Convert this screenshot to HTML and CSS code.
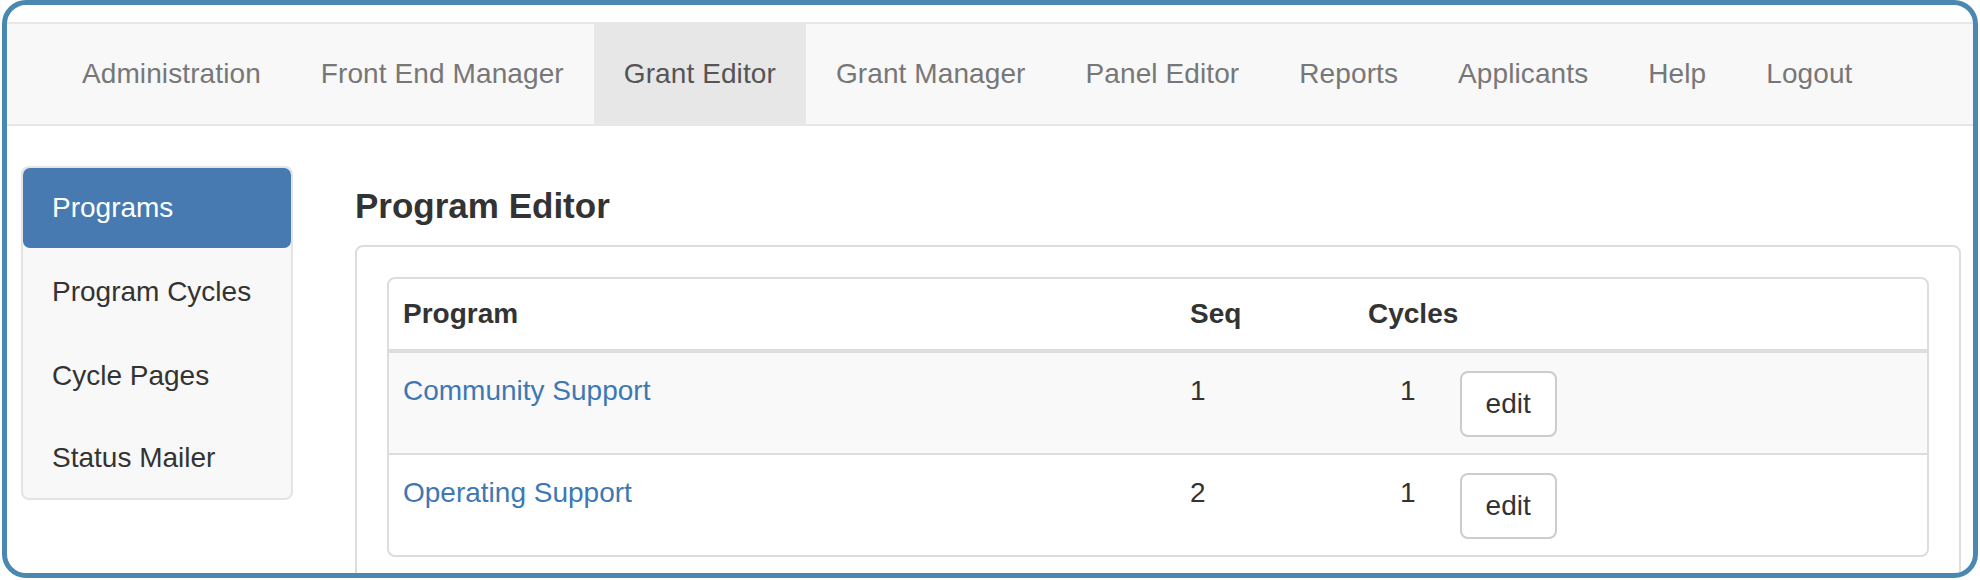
FILE: index.html
```html
<!DOCTYPE html>
<html>
<head>
<meta charset="utf-8">
<title>Program Editor</title>
<link rel="stylesheet" href="styles.css">
</head>
<body>
<div class="frame">
  <nav class="navbar">
    <ul class="nav">
      <li><a href="#">Administration</a></li>
      <li><a href="#">Front End Manager</a></li>
      <li class="active"><a href="#">Grant Editor</a></li>
      <li><a href="#">Grant Manager</a></li>
      <li><a href="#">Panel Editor</a></li>
      <li><a href="#">Reports</a></li>
      <li><a href="#">Applicants</a></li>
      <li><a href="#">Help</a></li>
      <li><a href="#">Logout</a></li>
    </ul>
  </nav>
  <div class="layout">
    <aside class="sidebar">
      <a class="side-item active" href="#">Programs</a>
      <a class="side-item" href="#">Program Cycles</a>
      <a class="side-item" href="#">Cycle Pages</a>
      <a class="side-item last" href="#">Status Mailer</a>
    </aside>
    <main class="main">
      <h4 class="title">Program Editor</h4>
      <div class="panel">
        <div class="table-box">
          <table class="grid">
            <thead>
              <tr>
                <th class="col-program">Program</th>
                <th class="col-seq">Seq</th>
                <th>Cycles</th>
              </tr>
            </thead>
            <tbody>
              <tr class="odd">
                <td><a class="link" href="#">Community Support</a></td>
                <td>1</td>
                <td><div class="cycles"><span class="count">1</span><button class="btn">edit</button></div></td>
              </tr>
              <tr>
                <td><a class="link" href="#">Operating Support</a></td>
                <td>2</td>
                <td><div class="cycles"><span class="count">1</span><button class="btn">edit</button></div></td>
              </tr>
            </tbody>
          </table>
        </div>
      </div>
    </main>
  </div>
</div>
</body>
</html>
```
FILE: styles.css
```css
html, body {
  margin: 0;
  padding: 0;
  background: #ffffff;
}
body {
  font-family: "Liberation Sans", Arial, Helvetica, sans-serif;
  font-size: 28px;
  line-height: 40px;
  color: #333333;
}
.frame {
  box-sizing: border-box;
  margin: 0 2px;
  height: 578px;
  border: 5px solid #4a87b1;
  border-radius: 24px;
  overflow: hidden;
  padding-top: 17px;
  background: #ffffff;
}
.navbar {
  background: #f8f8f8;
  border-top: 2px solid #e7e7e7;
  border-bottom: 2px solid #e7e7e7;
  height: 100px;
}
.nav {
  list-style: none;
  margin: 0;
  padding: 0 0 0 45px;
  display: flex;
  height: 100px;
}
.nav li a {
  display: block;
  padding: 30px 30px;
  line-height: 40px;
  color: #777777;
  text-decoration: none;
  letter-spacing: 0.1px;
}
.nav li.active a {
  background: #e7e7e7;
  color: #555555;
}
.layout {
  display: flex;
  align-items: flex-start;
  margin-top: 40px;
  padding: 0 12px 0 14px;
  gap: 62px;
}
.sidebar {
  flex: 0 0 272px;
  box-sizing: border-box;
  width: 272px;
  background: #f8f8f8;
  border: 2px solid #e4e4e4;
  border-radius: 8px;
  display: flex;
  flex-direction: column;
}
.side-item {
  display: block;
  height: 84px;
  line-height: 84px;
  padding: 0 30px 0 29px;
  color: #333333;
  text-decoration: none;
}
.side-item.active {
  height: 80px;
  line-height: 80px;
  margin-bottom: 2px;
  background: #467ab1;
  color: #ffffff;
  border-radius: 7px;
}
.side-item.last {
  height: 80px;
  line-height: 80px;
}
.main {
  flex: 1 1 auto;
  min-width: 0;
}
.title {
  margin: 20px 0 19px 0;
  font-size: 35px;
  line-height: 40px;
  font-weight: bold;
  color: #333333;
}
.panel {
  border: 2px solid #dddddd;
  border-radius: 8px;
  padding: 30px;
}
.table-box {
  border: 2px solid #dddddd;
  border-radius: 8px;
  overflow: hidden;
}
.grid {
  width: 100%;
  border-collapse: collapse;
}
.grid th {
  text-align: left;
  font-weight: bold;
  padding: 15px 14px;
  line-height: 40px;
  border-bottom: 4px solid #dddddd;
  vertical-align: bottom;
}
.grid td {
  padding: 18px 14px 16px 14px;
  line-height: 40px;
  vertical-align: top;
}
.grid tbody tr + tr td {
  border-top: 2px solid #dddddd;
}
.grid tr.odd td {
  background: #f9f9f9;
}
.col-program {
  width: 759px;
}
.col-seq {
  width: 150px;
}
.link {
  color: #3d78b3;
  text-decoration: none;
}
.cycles {
  display: flex;
  align-items: flex-start;
}
.count {
  margin-left: 32px;
}
.btn {
  margin-left: 44px;
  margin-top: 0;
  box-sizing: border-box;
  height: 66px;
  padding: 0 24px;
  font-family: "Liberation Sans", Arial, Helvetica, sans-serif;
  font-size: 28px;
  line-height: 62px;
  color: #333333;
  background: #ffffff;
  border: 2px solid #cccccc;
  border-radius: 8px;
}
```
